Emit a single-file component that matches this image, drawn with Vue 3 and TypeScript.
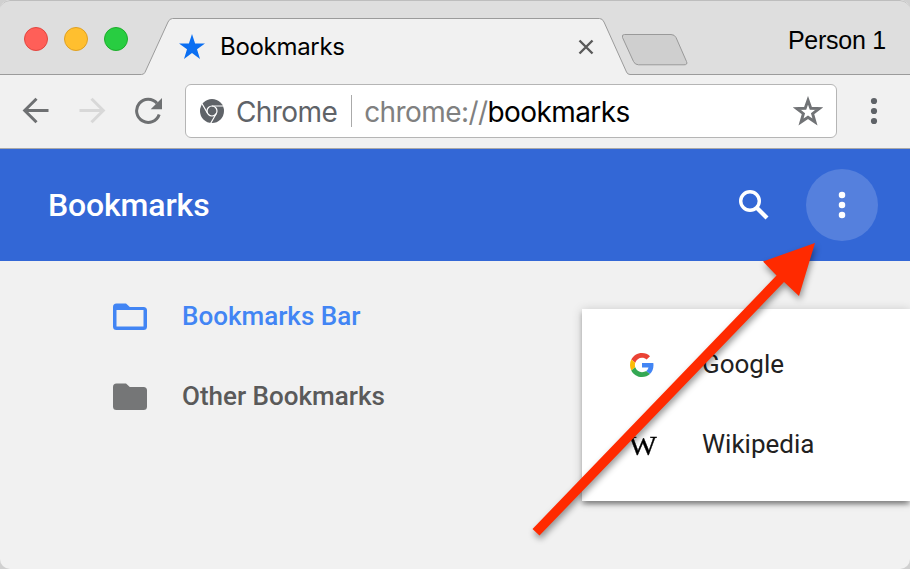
<script setup lang="ts">
interface Folder {
  name: string
  active: boolean
}

interface Bookmark {
  name: string
  icon: 'google' | 'wikipedia'
}

const lights: string[] = ['close', 'minimize', 'maximize']

const folders: Folder[] = [
  { name: 'Bookmarks Bar', active: true },
  { name: 'Other Bookmarks', active: false },
]

const bookmarks: Bookmark[] = [
  { name: 'Google', icon: 'google' },
  { name: 'Wikipedia', icon: 'wikipedia' },
]
</script>

<template>
  <div class="window">
    <header class="tabstrip">
      <svg class="tab-shape" viewBox="0 0 910 75" width="910" height="75">
        <path
          d="M0 74.5H141.5Q144 74.5 145 72.3L168 22Q169.500 18.500 172.500 18.500H599.500Q602.500 18.500 604 22L626.500 72Q627.500 74.500 630 74.500H910V76H0Z"
          fill="#f1f1f1"
          stroke="#9b9b9b"
        />
        <path
          d="M624.500 34.500H671Q674.500 34.500 676 37.500L686.500 61.500Q688 64.800 684 64.800H638.500Q635 64.800 633.500 61.500L622.500 37.500Q621.500 34.500 624.500 34.500Z"
          fill="#cfcfcf"
          stroke="#999"
        />
      </svg>
      <div class="lights">
        <span v-for="light in lights" :key="light" class="light" :class="light"></span>
      </div>
      <div class="tab">
        <svg class="tab-star" viewBox="0 0 26 26" width="26" height="26">
          <path d="M13 0 16.100 9.400H26L18 15.200 21 25 13 19.100 5 25 8 15.200 0 9.400H9.900Z" fill="#0b6ff2" />
        </svg>
        <span class="tab-title">Bookmarks</span>
        <svg class="tab-close" viewBox="0 0 16 16" width="16" height="16">
          <path d="M1.500 1.500 14.500 14.500M14.500 1.500 1.500 14.500" stroke="#5a5a5a" stroke-width="2.400" />
        </svg>
      </div>
      <span class="person">Person 1</span>
    </header>

    <div class="toolbar">
      <svg class="nav-icon" viewBox="0 0 28 28" width="28" height="28">
        <path d="M26.500 13.500H3M14.500 1.700 2.700 13.500 14.500 25.300" fill="none" stroke="#6e7072" stroke-width="3" />
      </svg>
      <svg class="nav-icon forward" viewBox="0 0 28 28" width="28" height="28">
        <path d="M1.500 13.500H25M13.500 1.700 25.300 13.500 13.500 25.300" fill="none" stroke="#d8d8d8" stroke-width="3" />
      </svg>
      <svg class="nav-icon reload" viewBox="0 0 28 28" width="28" height="28">
        <path d="M25.200 17.500A11.600 11.600 0 1 1 23 6.200" fill="none" stroke="#6e7072" stroke-width="3" />
        <path d="M28 1V12.300H16.700Z" fill="#6e7072" />
      </svg>
      <div class="omnibox">
        <svg class="chrome-logo" viewBox="0 0 24 24" width="24" height="24">
          <circle cx="12" cy="12" r="12" fill="#5f6368" />
          <g fill="none" stroke="#fff" stroke-width="1.200">
            <circle cx="12" cy="12" r="5" />
            <path d="M12 7H23.200M7.670 14.500 2.070 4.800M16.330 14.500 10.730 24.200" />
          </g>
        </svg>
        <span class="scheme">Chrome</span>
        <span class="divider"></span>
        <span class="url"><span class="protocol">chrome://</span>bookmarks</span>
        <svg class="star" viewBox="0 0 30 30" width="30" height="30">
          <path
            d="M15 4.300 17.800 12.300 26.300 12.500 19.600 17.700 22 26 15 21.200 8 26 10.400 17.700 3.700 12.500 12.200 12.300Z"
            fill="none"
            stroke="#717376"
            stroke-width="2.900"
          />
        </svg>
      </div>
      <svg class="menu-dots" viewBox="0 0 8 28" width="8" height="28">
        <g fill="#5f6368"><circle cx="4" cy="4" r="3.100" /><circle cx="4" cy="14" r="3.100" /><circle cx="4" cy="24" r="3.100" /></g>
      </svg>
    </div>

    <div class="appbar">
      <h1 class="title">Bookmarks</h1>
      <svg class="search" viewBox="0 0 32 32" width="32" height="32">
        <circle cx="12" cy="12" r="9.300" fill="none" stroke="#fff" stroke-width="3.400" />
        <path d="M18.500 18.500 29 29" stroke="#fff" stroke-width="4.200" />
      </svg>
      <button class="more" aria-label="More actions">
        <svg viewBox="0 0 8 28" width="8" height="28">
          <g fill="#fff"><circle cx="4" cy="4" r="3.250" /><circle cx="4" cy="14" r="3.250" /><circle cx="4" cy="24" r="3.250" /></g>
        </svg>
      </button>
    </div>

    <main class="content">
      <nav class="folders">
        <div v-for="folder in folders" :key="folder.name" class="folder" :class="{ active: folder.active }">
          <svg viewBox="0 0 34 28" width="34" height="28">
            <path
              v-if="folder.active"
              d="M3.500 .5H13L16.800 4H30.500Q34 4 34 7.500V23.500Q34 27 30.500 27H3.500Q0 27 0 23.500V4Q0 .5 3.500 .5ZM3.500 7V23.500H30.500V7Z"
              fill="currentColor"
              fill-rule="evenodd"
            />
            <path
              v-else
              d="M3.500 .5H13L16.800 4H30.500Q34 4 34 7.500V23.500Q34 27 30.500 27H3.500Q0 27 0 23.500V4Q0 .5 3.500 .5Z"
              fill="#757677"
            />
          </svg>
          <span>{{ folder.name }}</span>
        </div>
      </nav>
      <section class="card">
        <div v-for="bookmark in bookmarks" :key="bookmark.name" class="bookmark">
          <svg v-if="bookmark.icon === 'google'" class="favicon" viewBox="0 0 48 48" width="24" height="24">
            <path fill="#ea4335" d="M24 9.500c3.540 0 6.710 1.220 9.210 3.600l6.850-6.850C35.900 2.380 30.470 0 24 0 14.620 0 6.510 5.380 2.560 13.220l7.980 6.190C12.430 13.720 17.740 9.500 24 9.500z" />
            <path fill="#4285f4" d="M46.980 24.550c0-1.570-.15-3.090-.38-4.550H24v9.020h12.940c-.58 2.960-2.260 5.480-4.780 7.180l7.730 6c4.510-4.180 7.090-10.360 7.090-17.650z" />
            <path fill="#fbbc05" d="M10.530 28.590c-.48-1.450-.76-2.990-.76-4.590s.27-3.140.76-4.590l-7.980-6.190C.92 16.460 0 20.120 0 24c0 3.880.92 7.540 2.560 10.780l7.970-6.190z" />
            <path fill="#34a853" d="M24 48c6.480 0 11.930-2.130 15.890-5.810l-7.730-6c-2.150 1.450-4.920 2.300-8.160 2.300-6.260 0-11.570-4.220-13.470-9.910l-7.980 6.190C6.510 42.620 14.620 48 24 48z" />
          </svg>
          <span v-else class="favicon wiki">W</span>
          <span class="label">{{ bookmark.name }}</span>
        </div>
      </section>
    </main>

    <svg class="arrow" viewBox="0 0 910 569" width="910" height="569">
      <path d="M815 243 799 296 784 282 539.500 535.500 532.500 529 776.500 275.500 763 261.500Z" fill="#ff2a00" />
    </svg>
  </div>
</template>

<style>
body {
  margin: 0;
  background: #d0d0d0;
}
</style>

<style scoped>
.window {
  position: relative;
  box-sizing: border-box;
  width: 910px;
  height: 569px;
  overflow: hidden;
  border-radius: 10px;
  background: #f1f1f1;
  font-family: Roboto, sans-serif;
  white-space: nowrap;
}
.tabstrip {
  position: relative;
  box-sizing: border-box;
  display: flex;
  height: 75px;
  background: #dedede;
  border-top: 1px solid #bdbdbd;
  border-radius: 10px 10px 0 0;
}
.tab-shape {
  position: absolute;
  left: 0;
  top: -1px;
}
.lights {
  position: relative;
  display: flex;
  gap: 16px;
  padding: 26px 0 0 24px;
  width: 155px;
  box-sizing: border-box;
}
.light {
  box-sizing: border-box;
  width: 24px;
  height: 24px;
  border-radius: 50%;
}
.close { background: #ff5f58; border: 1px solid #e2463f; }
.minimize { background: #ffbf2f; border: 1px solid #dfa023; }
.maximize { background: #28cd41; border: 1px solid #1dad2b; }
.tab {
  position: relative;
  display: flex;
  align-items: center;
  box-sizing: border-box;
  width: 465px;
  height: 56px;
  margin-top: 18px;
  padding: 0 26px 0 24px;
}
.tab-title {
  margin: 0 auto 0 15px;
  padding-bottom: 2px;
  font: 24px Inter, sans-serif;
  letter-spacing: -0.3px;
  color: #000;
}
.tab-star,
.tab-close,
.chrome-logo,
.star {
  flex: none;
}
.person {
  position: relative;
  margin: 24px 24px 0 auto;
  font: 25px/30px "Liberation Sans", sans-serif;
  letter-spacing: -0.25px;
  color: #000;
}
.toolbar {
  box-sizing: border-box;
  display: flex;
  align-items: center;
  height: 74px;
  padding: 0 32px 1px 22px;
  border-bottom: 1px solid #a9a9a9;
}
.nav-icon { flex: none; }
.forward,
.reload { margin-left: 28px; }
.omnibox {
  box-sizing: border-box;
  display: flex;
  align-items: center;
  width: 652px;
  height: 54px;
  margin: 0 auto 0 23px;
  padding: 0 13px 0 14px;
  border: 1px solid #b5b5b5;
  border-radius: 6px;
  background: #fff;
  font: 28px Inter, sans-serif;
}
.scheme {
  padding-top: 2px;
  margin-left: 12px;
  letter-spacing: -0.6px;
  color: #5f6368;
}
.divider {
  width: 1px;
  height: 32px;
  margin: 0 12px 0 14px;
  background: #aaa;
}
.url {
  padding-top: 2px;
  letter-spacing: -0.58px;
  color: #000;
}
.protocol { color: #808080; }
.star { margin-left: auto; }
.appbar {
  display: flex;
  align-items: center;
  height: 112px;
  padding: 0 32px 0 48px;
  background: #3367d6;
}
.title {
  margin: 0 auto 0 0;
  font-size: 32px;
  font-weight: 500;
  letter-spacing: -0.15px;
  color: #fff;
}
.search { margin-right: 36px; }
.more {
  display: flex;
  align-items: center;
  justify-content: center;
  width: 72px;
  height: 72px;
  padding: 0;
  border: 0;
  border-radius: 50%;
  background: #5580dd;
}
.content {
  display: flex;
  height: 308px;
}
.folders {
  box-sizing: border-box;
  width: 582px;
  padding: 15px 0 0 113px;
}
.folder {
  display: flex;
  align-items: center;
  gap: 35px;
  height: 80px;
  font-size: 26px;
  font-weight: 500;
  color: #5a5a5a;
}
.folder svg { padding-top: 2px; }
.active { color: #4285f4; }
.card {
  box-sizing: border-box;
  flex: 1;
  height: 192px;
  margin-top: 48px;
  padding: 16px 0 16px 48px;
  background: #fff;
  box-shadow: 0 4px 4px rgba(0, 0, 0, 0.24), 0 1px 10px rgba(0, 0, 0, 0.18), 0 6px 4px -4px rgba(0, 0, 0, 0.2);
}
.bookmark {
  display: flex;
  align-items: center;
  height: 80px;
  font-size: 26px;
  color: #212121;
}
.favicon {
  flex: none;
  width: 24px;
  margin-right: 48px;
}
.label { padding-bottom: 2px; }
.wiki {
  padding-top: 2px;
  font: 27px "Liberation Serif", serif;
  color: #000;
  transform: scaleX(1.1);
  -webkit-text-stroke: 0.3px #000;
}
.arrow {
  position: absolute;
  left: 0;
  top: 0;
  filter: drop-shadow(1px 4px 3px rgba(0, 0, 0, 0.4));
}
</style>
